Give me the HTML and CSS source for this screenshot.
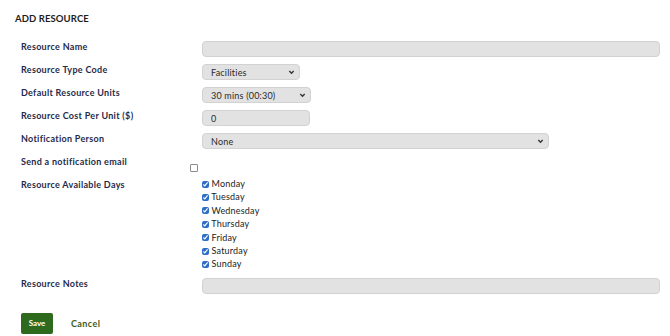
FILE: index.html
```html
<!DOCTYPE html>
<html>
<head lang="en">
    <meta charset="UTF-8">
    <title>Add Resource</title>
    <link rel="stylesheet" href="styles.css">
</head>
<body>
    <main class="page">
        <h1 class="title">Add Resource</h1>

        <form class="resource-form">
            <label class="field-label">Resource Name</label>
            <div class="field"><input class="input input-wide" type="text"></div>

            <label class="field-label">Resource Type Code</label>
            <div class="field">
                <span class="select-wrap sel-type">
                    <select class="input select"><option>Facilities</option></select>
                    <svg class="chevron" viewBox="0 0 8 6"><path d="M1.5 1.8 L4 4.3 L6.5 1.8" fill="none" stroke="#333" stroke-width="1.6"/></svg>
                </span>
            </div>

            <label class="field-label">Default Resource Units</label>
            <div class="field">
                <span class="select-wrap sel-units">
                    <select class="input select"><option>30 mins (00:30)</option></select>
                    <svg class="chevron" viewBox="0 0 8 6"><path d="M1.5 1.8 L4 4.3 L6.5 1.8" fill="none" stroke="#333" stroke-width="1.6"/></svg>
                </span>
            </div>

            <label class="field-label">Resource Cost Per Unit ($)</label>
            <div class="field"><input class="input input-cost" type="text" value="0"></div>

            <label class="field-label">Notification Person</label>
            <div class="field">
                <span class="select-wrap sel-person">
                    <select class="input select"><option>None</option></select>
                    <svg class="chevron" viewBox="0 0 8 6"><path d="M1.5 1.8 L4 4.3 L6.5 1.8" fill="none" stroke="#333" stroke-width="1.6"/></svg>
                </span>
            </div>

            <label class="field-label">Send a notification email</label>
            <div class="field field-notify"><input class="check check-plain" type="checkbox"></div>

            <label class="field-label">Resource Available Days</label>
            <ul class="field days">
                <li><input class="check" type="checkbox" checked> Monday</li>
                <li><input class="check" type="checkbox" checked> Tuesday</li>
                <li><input class="check" type="checkbox" checked> Wednesday</li>
                <li><input class="check" type="checkbox" checked> Thursday</li>
                <li><input class="check" type="checkbox" checked> Friday</li>
                <li><input class="check" type="checkbox" checked> Saturday</li>
                <li><input class="check" type="checkbox" checked> Sunday</li>
            </ul>

            <label class="field-label">Resource Notes</label>
            <div class="field"><input class="input input-wide" type="text"></div>
        </form>

        <div class="actions">
            <button class="btn-save" type="button">Save</button>
            <a class="btn-cancel" href="#">Cancel</a>
        </div>
    </main>
</body>
</html>
```

FILE: styles.css
```css
html, body {
    margin: 0;
    padding: 0;
    background: #fff;
}

body {
    font-family: Lato, "Noto Sans", sans-serif;
    color: #222;
}

.page {
    padding: 13px 10px 0 15px;
}

.title {
    margin: 0;
    font-size: 9.5px;
    line-height: 12px;
    font-weight: 700;
    text-transform: uppercase;
    letter-spacing: 0.1px;
    color: #1d1d1d;
}

.resource-form {
    display: grid;
    grid-template-columns: 181px 1fr;
    row-gap: 7px;
    align-items: start;
    margin-top: 16px;
    padding-left: 6px;
}

.field-label {
    font-size: 9px;
    line-height: 12px;
    font-weight: 700;
    letter-spacing: 0.3px;
    color: #1f2b4b;
}

.field {
    margin: 0;
    display: block;
}

.input {
    box-sizing: border-box;
    height: 16px;
    margin: 0;
    padding: 0 8px;
    border: 1px solid #d2d2d2;
    border-radius: 4px;
    background-color: #e2e2e2;
    font-family: Lato, "Noto Sans", sans-serif;
    font-size: 9px;
    letter-spacing: 0.2px;
    color: #2a2a2a;
    outline: none;
}

.input-wide {
    width: 100%;
    display: block;
}

.input-cost {
    width: 108px;
    display: block;
}

.select-wrap {
    position: relative;
    display: block;
}

.select {
    appearance: none;
    -webkit-appearance: none;
    width: 100%;
    display: block;
}

.sel-type { width: 98px; }
.sel-units { width: 109px; }
.sel-person { width: 347px; }

.chevron {
    position: absolute;
    right: 5px;
    top: 5px;
    width: 7px;
    height: 6px;
}

.check {
    width: 7px;
    height: 7px;
    margin: 0;
    accent-color: #2d6dc4;
    vertical-align: -0.5px;
}

.check-plain {
    appearance: none;
    -webkit-appearance: none;
    box-sizing: border-box;
    width: 8px;
    height: 8px;
    border: 1px solid #8a8a8a;
    border-radius: 1px;
    background: #fff;
}

.field-notify {
    margin-left: -12px;
    padding-top: 8px;
    line-height: 0;
}

.days {
    list-style: none;
    padding: 0;
    margin-top: -2px;
}

.days li {
    font-size: 9px;
    line-height: 13.4px;
    letter-spacing: 0.2px;
    color: #222;
}

.actions {
    display: flex;
    align-items: center;
    gap: 18px;
    margin-top: 19px;
    padding-left: 6px;
}

.btn-save {
    width: 32px;
    height: 21px;
    border: 0;
    border-radius: 2px;
    background: #2e6a1e;
    color: #fff;
    font-family: Lato, "Noto Sans", sans-serif;
    font-size: 8px;
    font-weight: 700;
    padding: 0;
}

.btn-cancel {
    font-size: 9px;
    font-weight: 700;
    color: #3d5a22;
    text-decoration: none;
    letter-spacing: 0.4px;
}
```
